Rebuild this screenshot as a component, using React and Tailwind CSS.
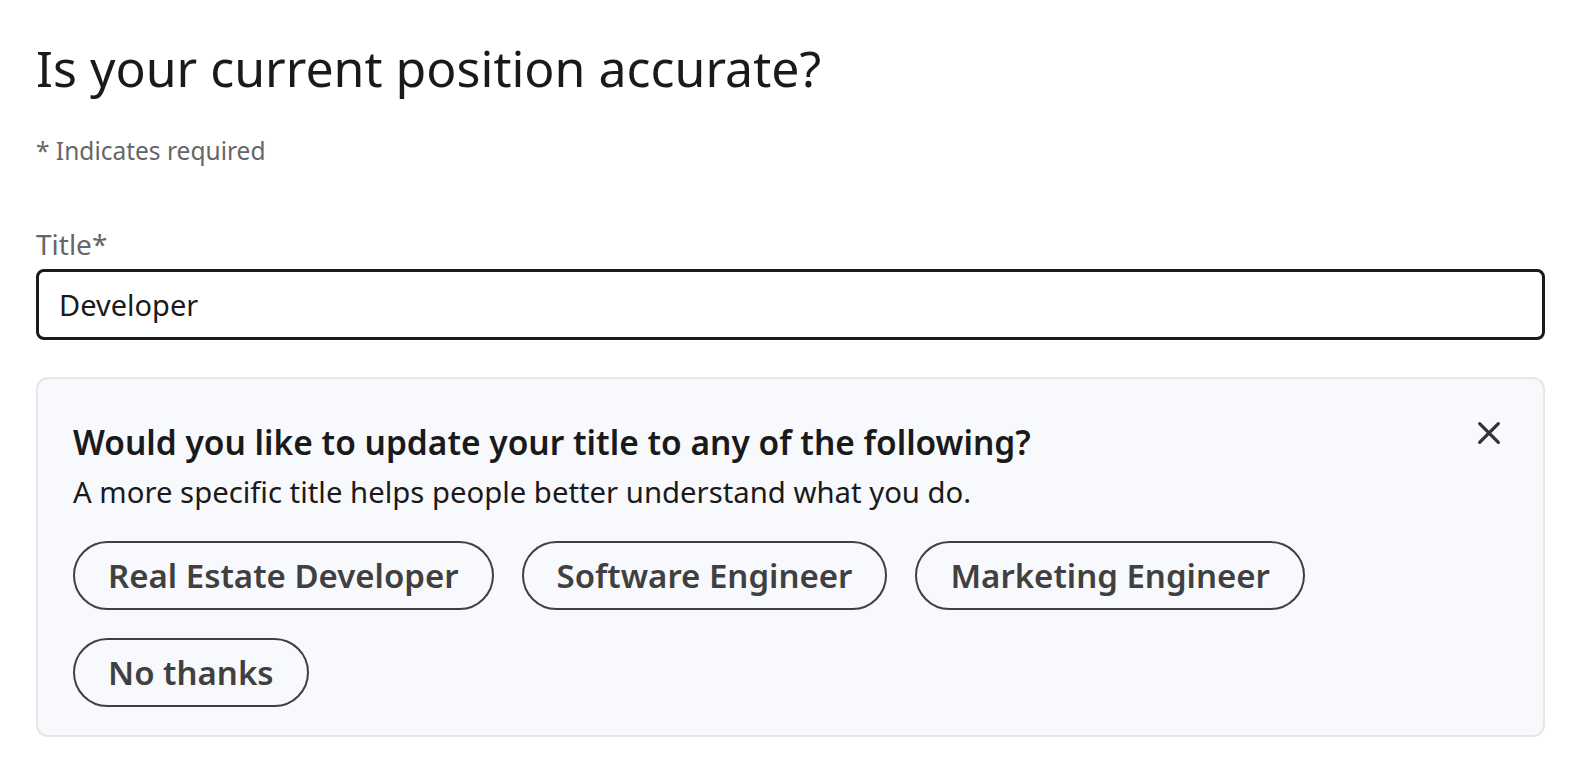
import React, { useState } from "react"

function CloseIcon() {
    return (
        <svg width="28" height="28" viewBox="0 0 24 24" fill="none" stroke="currentColor" strokeWidth="2.8" strokeLinecap="round">
            <path d="M4 4 L20 20 M20 4 L4 20" />
        </svg>
    )
}

function Chip({ label }) {
    return (
        <button className="h-[69px] px-[33px] rounded-full border-2 border-[#404040] text-[#404040] text-[33px] font-semibold leading-none">
            {label}
        </button>
    )
}

export default function App() {
    const [title, setTitle] = useState("Developer")
    const suggestions = ["Real Estate Developer", "Software Engineer", "Marketing Engineer", "No thanks"]

    return (
        <div className="min-h-screen bg-white pl-[36px] pr-[33px] pt-[36px] font-['Noto_Sans',sans-serif]">
            <h1 className="text-[50px] leading-[64px] text-[#1a1a1a]">Is your current position accurate?</h1>
            <p className="mt-[35px] text-[24.5px] leading-[32px] text-[#666666]">* Indicates required</p>

            <label className="block mt-[59px] text-[28px] leading-[36px] text-[#666666]">Title*</label>
            <input
                value={title}
                onChange={(e) => setTitle(e.target.value)}
                className="mt-[7px] block w-full h-[71px] px-[20px] border-[3px] border-[#1a1a1a] rounded-[8px] text-[29px] text-[#1a1a1a] outline-none"
            />

            <div className="mt-[37px] rounded-[12px] border-2 border-[#e6e6e6] bg-[#f8f9fc] pl-[35px] pr-[40px] pt-[41px] pb-[28px]">
                <div className="flex justify-between items-start">
                    <div>
                        <h2 className="text-[33.5px] leading-[44px] font-semibold text-[#1a1a1a]">Would you like to update your title to any of the following?</h2>
                        <p className="mt-[10px] text-[29.3px] leading-[36px] text-[#1a1a1a]">A more specific title helps people better understand what you do.</p>
                    </div>
                    <button className="text-[#333333] -mt-[1px]">
                        <CloseIcon />
                    </button>
                </div>
                <div className="mt-[31px] flex flex-wrap gap-[28px]">
                    {suggestions.map((s) => (
                        <Chip key={s} label={s} />
                    ))}
                </div>
            </div>
        </div>
    )
}
